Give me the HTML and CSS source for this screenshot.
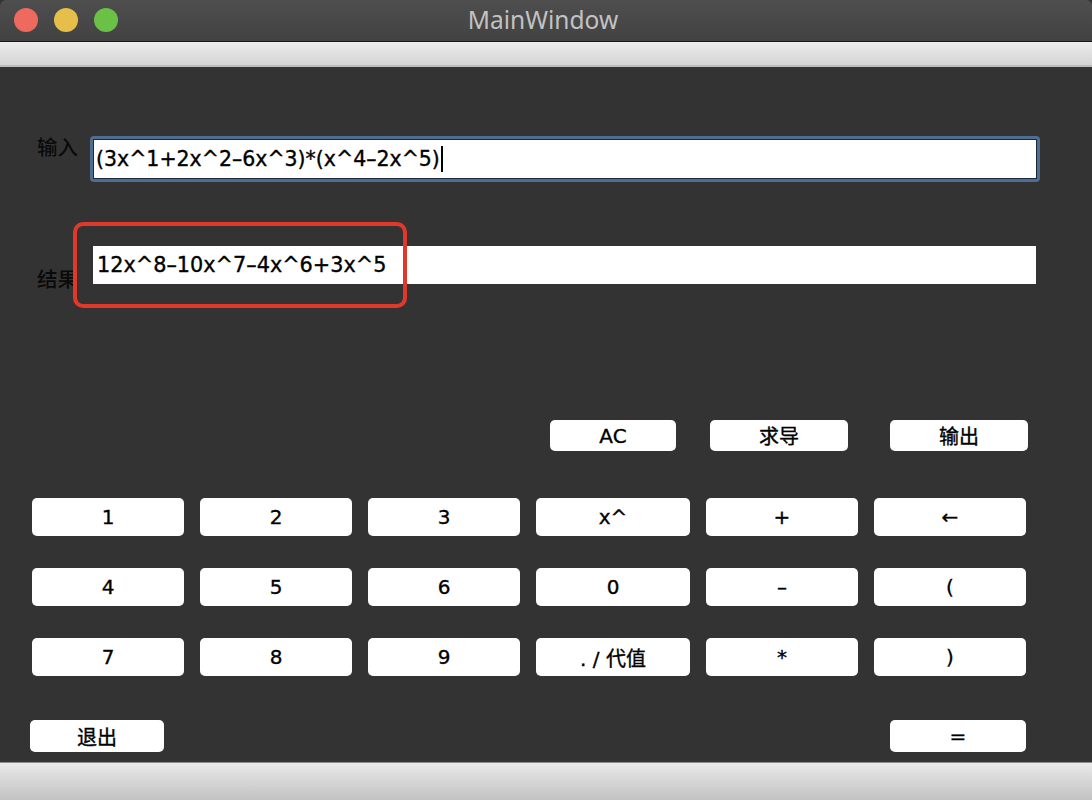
FILE: index.html
```html
<!DOCTYPE html>
<html lang="zh">
<head>
<meta charset="utf-8">
<title>MainWindow</title>
<link rel="stylesheet" href="styles.css">
</head>
<body>
<div class="window">
  <header class="titlebar">
    <div class="lights">
      <span class="light red"></span>
      <span class="light yellow"></span>
      <span class="light green"></span>
    </div>
    <div class="title">MainWindow</div>
  </header>
  <div class="toolbar"></div>
  <main class="content">
    <div class="row-input">
      <label class="lbl lbl-in">输入</label>
      <div class="focus-ring">
        <div class="field field-in">(3x^1+2x^2–6x^3)*(x^4–2x^5)<span class="caret"></span></div>
      </div>
    </div>
    <div class="row-result">
      <label class="lbl lbl-res">结果</label>
      <div class="field field-res">12x^8–10x^7–4x^6+3x^5</div>
      <div class="annot"></div>
    </div>
    <div class="row-top">
      <button class="btn btn-ac">AC</button>
      <button class="btn btn-der">求导</button>
      <button class="btn btn-out">输出</button>
    </div>
    <div class="keypad">
      <button class="btn key">1</button>
      <button class="btn key">2</button>
      <button class="btn key">3</button>
      <button class="btn key">x^</button>
      <button class="btn key">+</button>
      <button class="btn key">←</button>
      <button class="btn key">4</button>
      <button class="btn key">5</button>
      <button class="btn key">6</button>
      <button class="btn key">0</button>
      <button class="btn key">–</button>
      <button class="btn key">(</button>
      <button class="btn key">7</button>
      <button class="btn key">8</button>
      <button class="btn key">9</button>
      <button class="btn key">. / 代值</button>
      <button class="btn key">*</button>
      <button class="btn key">)</button>
    </div>
    <div class="row-bottom">
      <button class="btn btn-quit">退出</button>
      <button class="btn btn-eq">=</button>
    </div>
  </main>
  <footer class="statusbar"></footer>
</div>
</body>
</html>
```
FILE: styles.css
```css
html, body {
  margin: 0;
  padding: 0;
  background: #333333;
}
body {
  font-family: "DejaVu Sans", "Noto Sans CJK SC", sans-serif;
}
.window {
  width: 1092px;
  height: 800px;
  display: flex;
  flex-direction: column;
  overflow: hidden;
  background: #333333;
}
.titlebar {
  height: 41px;
  flex: none;
  position: relative;
  display: flex;
  align-items: center;
  justify-content: center;
  background: linear-gradient(#4e4e4e, #424242);
  border-bottom: 1px solid #151515;
  border-radius: 6px 6px 0 0;
}
.lights {
  position: absolute;
  left: 14px;
  top: 8px;
  display: flex;
  gap: 16px;
}
.light {
  width: 24px;
  height: 24px;
  border-radius: 50%;
  display: block;
}
.red { background: #ee6a5e; }
.yellow { background: #e6bf4b; }
.green { background: #6bc046; }
.title {
  color: #c2c2c2;
  font-family: "Noto Sans", "DejaVu Sans", sans-serif;
  font-size: 24.5px;
  line-height: 30px;
  margin-top: -1px;
  margin-right: 6px;
}
.toolbar {
  height: 23px;
  flex: none;
  background: linear-gradient(#ececec, #d4d4d4);
  border-bottom: 2px solid #bdbdbd;
}
.content {
  flex: 1;
  background: #333333;
  display: flex;
  flex-direction: column;
}
.lbl {
  color: #0a0a0a;
  font-family: "Noto Sans CJK SC", sans-serif;
  font-weight: 500;
  font-size: 20.5px;
  line-height: 22px;
}
.row-input {
  display: flex;
  align-items: flex-start;
  margin-top: 69px;
  padding-left: 37px;
}
.lbl-in {
  width: 53px;
  margin-top: -1px;
}
.focus-ring {
  width: 944px;
  height: 40px;
  border: 3px solid #4f6d93;
  border-radius: 4px;
  background: #4f6d93;
}
.field {
  background: #ffffff;
  color: #000000;
  font-family: "DejaVu Sans", "Noto Sans CJK SC", sans-serif;
  font-size: 20.5px;
  -webkit-text-stroke: 0.35px #000;
  display: flex;
  align-items: center;
  box-sizing: border-box;
  white-space: pre;
}
.field-in {
  height: 40px;
  border: 1px solid #1c2938;
  padding-left: 2px;
}
.caret {
  display: inline-block;
  width: 2px;
  height: 26px;
  background: #000;
  margin-left: 1px;
}
.row-result {
  position: relative;
  display: flex;
  align-items: flex-end;
  margin-top: 64px;
  padding-left: 37px;
}
.lbl-res {
  width: 56px;
  margin-bottom: -5px;
}
.field-res {
  width: 943px;
  height: 38px;
  padding-left: 4px;
  font-size: 20.8px;
}
.annot {
  position: absolute;
  left: 73px;
  top: -24px;
  width: 326px;
  height: 78px;
  border: 4px solid #e0392b;
  border-radius: 10px;
}
.btn {
  margin: 0;
  padding: 0;
  border: none;
  background: #ffffff;
  border-radius: 5px;
  color: #000000;
  font-family: "DejaVu Sans", "Noto Sans CJK SC", sans-serif;
  font-size: 20px;
  -webkit-text-stroke: 0.35px #000;
  display: flex;
  align-items: center;
  justify-content: center;
}
.row-top {
  display: flex;
  justify-content: flex-end;
  margin-top: 136px;
  padding-right: 64px;
  height: 31px;
}
.btn-ac { width: 126px; }
.btn-der { width: 138px; margin-left: 34px; }
.btn-out { width: 138px; margin-left: 42px; }
.keypad {
  display: grid;
  grid-template-columns: 152px 152px 152px 154px 152px 152px;
  grid-auto-rows: 38px;
  column-gap: 16px;
  row-gap: 32px;
  margin-top: 47px;
  padding-left: 32px;
}
.row-bottom {
  display: flex;
  justify-content: space-between;
  margin-top: 44px;
  padding-left: 30px;
  padding-right: 66px;
  height: 32px;
}
.btn-quit { width: 134px; }
.btn-eq { width: 136px; }
.statusbar {
  height: 37px;
  flex: none;
  background: linear-gradient(#e9e9e9, #c2c2c2);
  border-top: 1px solid #8c8c8c;
}
```
